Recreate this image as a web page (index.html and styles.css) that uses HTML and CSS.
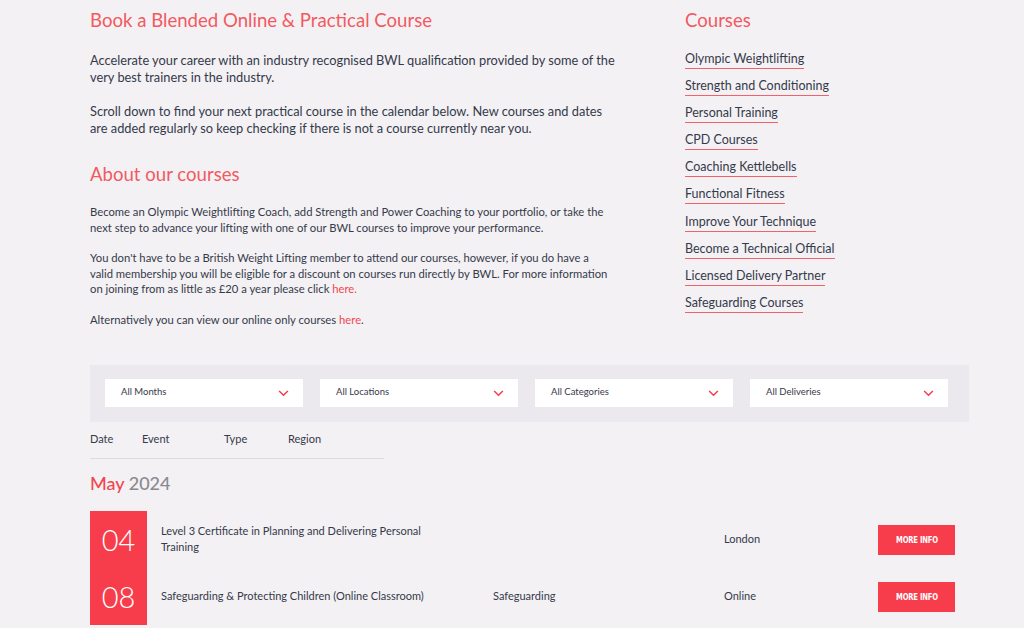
FILE: index.html
```html
<!DOCTYPE html>
<html lang="en">
<head>
<meta charset="utf-8">
<title>Courses</title>
<link rel="stylesheet" href="styles.css">
</head>
<body>
<div class="page">
  <section class="top">
    <div class="intro">
      <h1 class="title">Book a Blended Online &amp; Practical Course</h1>
      <p class="lead">Accelerate your career with an industry recognised BWL qualification provided by some of the very best trainers in the industry.</p>
      <p class="lead lead-2">Scroll down to find your next practical course in the calendar below. New courses and dates are added regularly so keep checking if there is not a course currently near you.</p>
      <h2 class="title title-2">About our courses</h2>
      <p class="small">Become an Olympic Weightlifting Coach, add Strength and Power Coaching to your portfolio, or take the next step to advance your lifting with one of our BWL courses to improve your performance.</p>
      <p class="small small-2">You don't have to be a British Weight Lifting member to attend our courses, however, if you do have a valid membership you will be eligible for a discount on courses run directly by BWL. For more information on joining from as little as £20 a year please click <a class="link" href="#">here.</a></p>
      <p class="small small-3">Alternatively you can view our online only courses <a class="link" href="#">here</a>.</p>
    </div>
    <aside class="courses">
      <h2 class="title">Courses</h2>
      <ul class="course-list">
        <li><a href="#">Olympic Weightlifting</a></li>
        <li><a href="#">Strength and Conditioning</a></li>
        <li><a href="#">Personal Training</a></li>
        <li><a href="#">CPD Courses</a></li>
        <li><a href="#">Coaching Kettlebells</a></li>
        <li><a href="#">Functional Fitness</a></li>
        <li><a href="#">Improve Your Technique</a></li>
        <li><a href="#">Become a Technical Official</a></li>
        <li><a href="#">Licensed Delivery Partner</a></li>
        <li><a href="#">Safeguarding Courses</a></li>
      </ul>
    </aside>
  </section>

  <section class="filters">
    <div class="select"><span>All Months</span><svg class="chev" viewBox="0 0 12 8" width="11" height="7"><path d="M1 1.2 L6 6 L11 1.2" fill="none" stroke="#f43f4e" stroke-width="1.8"/></svg></div>
    <div class="select"><span>All Locations</span><svg class="chev" viewBox="0 0 12 8" width="11" height="7"><path d="M1 1.2 L6 6 L11 1.2" fill="none" stroke="#f43f4e" stroke-width="1.8"/></svg></div>
    <div class="select"><span>All Categories</span><svg class="chev" viewBox="0 0 12 8" width="11" height="7"><path d="M1 1.2 L6 6 L11 1.2" fill="none" stroke="#f43f4e" stroke-width="1.8"/></svg></div>
    <div class="select"><span>All Deliveries</span><svg class="chev" viewBox="0 0 12 8" width="11" height="7"><path d="M1 1.2 L6 6 L11 1.2" fill="none" stroke="#f43f4e" stroke-width="1.8"/></svg></div>
  </section>

  <div class="thead">
    <span class="th th-date">Date</span>
    <span class="th th-event">Event</span>
    <span class="th th-type">Type</span>
    <span class="th th-region">Region</span>
  </div>

  <h3 class="month"><span class="month-name">May</span> <span class="month-year">2024</span></h3>

  <div class="events">
    <div class="event">
      <div class="day">04</div>
      <div class="ev-name">Level 3 Certificate in Planning and Delivering Personal Training</div>
      <div class="ev-type"></div>
      <div class="ev-region">London</div>
      <a class="btn" href="#"><span class="btn-label">MORE INFO</span></a>
    </div>
    <div class="event">
      <div class="day">08</div>
      <div class="ev-name">Safeguarding &amp; Protecting Children (Online Classroom)</div>
      <div class="ev-type">Safeguarding</div>
      <div class="ev-region">Online</div>
      <a class="btn" href="#"><span class="btn-label">MORE INFO</span></a>
    </div>
  </div>
</div>
</body>
</html>
```

FILE: styles.css
```css
* { box-sizing: border-box; }
html, body {
  margin: 0;
  padding: 0;
  background: #f3f1f4;
  font-family: "Lato", "Open Sans", sans-serif;
  color: #353a4a;
  overflow: hidden;
}
.page {
  width: 879px;
  margin-left: 90px;
}
.top {
  display: grid;
  grid-template-columns: 535px 1fr;
  column-gap: 60px;
}
.title {
  margin: 0;
  padding-top: 8px;
  font-size: 18.6px;
  line-height: 24px;
  font-weight: 400;
  color: #f25a5f;
}
.title-2 {
  padding-top: 0;
  margin-top: 25px;
}
.lead {
  margin: 20px 0 0;
  max-width: 528px;
  font-size: 12.8px;
  line-height: 17px;
}
.lead-2 { margin-top: 17px; }
.small {
  margin: 18px 0 0;
  max-width: 520px;
  font-size: 11.25px;
  line-height: 15.5px;
}
.small-2 { margin-top: 15px; }
.small-3 { margin-top: 15px; }
.link { color: #f2454f; text-decoration: none; }

.course-list {
  list-style: none;
  margin: 15px 0 0;
  padding: 0;
}
.course-list li {
  height: 27.1px;
}
.course-list a {
  display: inline-block;
  font-size: 12.5px;
  line-height: 16px;
  color: #353a4a;
  text-decoration: none;
  padding-bottom: 1px;
  border-bottom: 1.5px solid #f2626a;
}

.filters {
  margin-top: 38px;
  height: 57px;
  background: #ebe9ed;
  display: grid;
  grid-template-columns: repeat(4, 198px);
  column-gap: 17px;
  padding: 14px 15px;
}
.select {
  height: 28px;
  background: #fff;
  display: flex;
  align-items: center;
  justify-content: space-between;
  padding: 0 14px 3px 16px;
  font-size: 9.5px;
  color: #353a4a;
}
.chev { display: block; margin-top: 3px; }

.thead {
  display: flex;
  width: 294px;
  margin-top: 7px;
  padding: 2px 0 12px;
  border-bottom: 1px solid #dedce0;
  font-size: 11px;
  line-height: 15px;
}
.th-date { width: 52px; }
.th-event { width: 82px; }
.th-type { width: 64px; }

.month {
  margin: 12px 0 0;
  font-size: 18px;
  line-height: 24px;
  font-weight: 500;
}
.month-name { color: #f2454f; }
.month-year { color: #8b898f; }

.events {
  margin-top: 16px;
}
.event {
  display: grid;
  grid-template-columns: 57px 346px 231px 154px 77px;
  align-items: center;
  height: 57px;
  font-size: 11px;
  line-height: 16px;
}
.ev-name, .ev-type, .ev-region { padding-bottom: 2px; }
.day {
  height: 57px;
  background: #f73d4b;
  color: #fff;
  font-size: 29px;
  font-weight: 300;
  display: flex;
  align-items: center;
  justify-content: center;
}
.ev-name {
  padding-left: 14px;
  padding-right: 54px;
}
.btn {
  display: flex;
  align-items: center;
  justify-content: center;
  height: 30px;
  background: #f73d4b;
  color: #fff;
  text-decoration: none;
}
.btn-label {
  display: inline-block;
  font-family: "DejaVu Sans", sans-serif;
  font-weight: 700;
  font-size: 9.5px;
  letter-spacing: -0.3px;
  transform: scaleX(0.72);
  white-space: nowrap;
}
```
